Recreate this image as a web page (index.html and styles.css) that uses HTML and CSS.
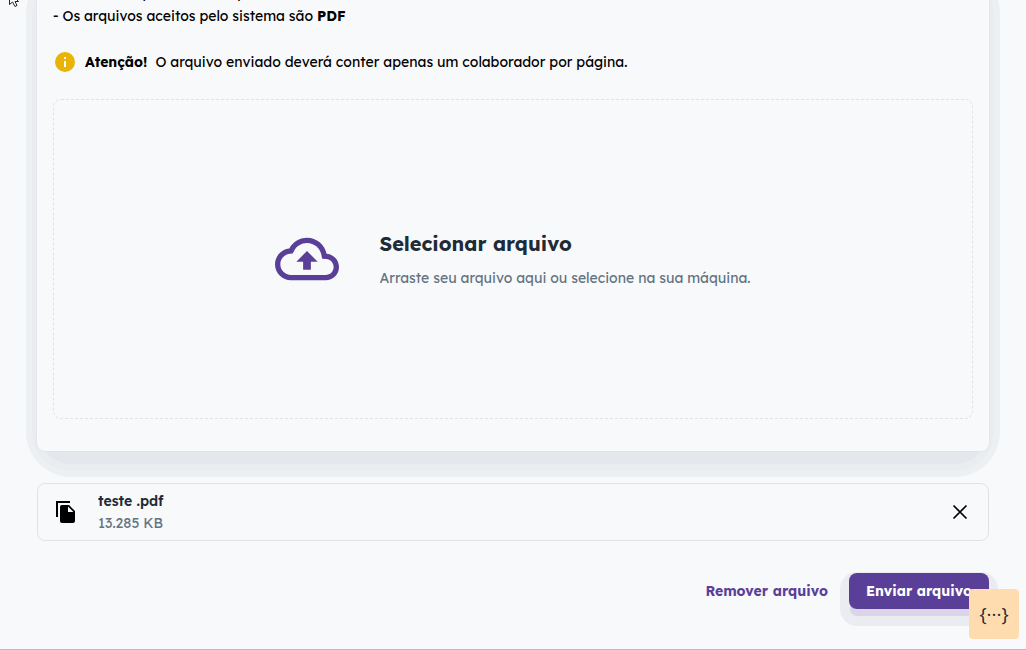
FILE: index.html
```html
<!DOCTYPE html>
<html lang="pt-BR">
<head>
<meta charset="UTF-8">
<meta name="viewport" content="width=device-width, initial-scale=1.0">
<title>Enviar arquivo</title>
<link rel="stylesheet" href="styles.css">
</head>
<body>

<main class="page">
    <section class="card">
        <p class="rule">- O tamanho permitido é o padrão</p>
        <p class="rule">- Os arquivos aceitos pelo sistema são <b>PDF</b></p>
        <div class="alert">
            <svg class="alert-icon" viewBox="0 0 24 24" aria-hidden="true">
                <path fill="#eab308" d="M12 2a10 10 0 1 0 0 20 10 10 0 0 0 0-20zm1 15h-2v-6h2zm0-8h-2V7h2z"/>
                <path fill="#fff" d="M11 11h2v6h-2zM11 7h2v2h-2z"/>
            </svg>
            <b>Atenção!</b>
            <span>O arquivo enviado deverá conter apenas um colaborador por página.</span>
        </div>
        <label class="dropzone" for="fileInput">
            <input class="file-input" type="file" id="fileInput" accept="application/pdf">
            <svg class="cloud" viewBox="0 0 24 24" aria-hidden="true">
                <path d="M19.35 10.04C18.67 6.59 15.64 4 12 4 9.11 4 6.6 5.64 5.35 8.04 2.34 8.36 0 10.91 0 14c0 3.31 2.69 6 6 6h13c2.76 0 5-2.24 5-5 0-2.64-2.05-4.78-4.65-4.96zM19 18H6c-2.21 0-4-1.79-4-4 0-2.05 1.53-3.76 3.56-3.97l1.07-.11.5-.95C8.08 7.14 9.94 6 12 6c2.62 0 4.88 1.86 5.39 4.43l.3 1.5 1.53.11c1.56.1 2.78 1.41 2.78 2.96 0 1.65-1.35 3-3 3zM8 13h2.55v3h2.9v-3H16l-4-4z"/>
            </svg>
            <span class="dropzone-text">
                <span class="dropzone-title">Selecionar arquivo</span>
                <span class="dropzone-hint">Arraste seu arquivo aqui ou selecione na sua máquina.</span>
            </span>
        </label>
    </section>

    <div class="file">
        <svg class="icon" viewBox="0 0 24 24" aria-hidden="true">
            <path d="M16 1H2v16h2V3h12V1zm-1 4 6 6v10c0 1.1-.9 2-2 2H7.99C6.89 23 6 22.1 6 21l.01-14c0-1.1.89-2 1.99-2h7zm-1 7h5.5L14 6.5V12z"/>
        </svg>
        <div class="file-info">
            <span class="file-name">teste .pdf</span>
            <span class="file-size">13.285 KB</span>
        </div>
        <button class="close" type="button" aria-label="Remover">
            <svg class="icon" viewBox="0 0 24 24" aria-hidden="true">
                <path fill="none" stroke="#000" stroke-width="1.7" d="M5.5 5.5l13 13M18.5 5.5l-13 13"/>
            </svg>
        </button>
    </div>

    <div class="actions">
        <button class="btn btn-text" type="button">Remover arquivo</button>
        <button class="btn btn-primary" type="submit">Enviar arquivo</button>
    </div>
</main>

<button class="snippet" type="button">{···}</button>

<svg class="pointer" viewBox="0 0 12 7" aria-hidden="true">
    <path fill="#fff" stroke="#222" d="M1.5-8V4.5L4.5 2 7 6.5 9 5.5 7 1.5h3.5z"/>
</svg>

</body>
</html>
```

FILE: styles.css
```css
* {
    box-sizing: border-box;
}

body {
    margin: 0;
    background-color: #f8f9fb;
    color: #000;
    font-family: Lexend, "Lexend Deca", Inter, sans-serif;
    font-size: 14px;
    line-height: 23px;
}

.page {
    height: 100vh;
    padding: 0 37px;
    overflow: hidden;
    border-bottom: 1px solid #b9bdc1;
}

/* the card is scrolled partly out of view */
.card {
    position: relative;
    z-index: 0;
    margin-top: -34px;
    padding: 16px 16px 32px;
}

/* surface and its stepped shadow */
.card::before,
.card::after {
    content: "";
    position: absolute;
    z-index: -1;
    inset: 0;
    border-radius: 8px;
    background-color: #f8f9fb;
    box-shadow: 0 0 2px #d5d9e0;
}

.card::before {
    inset: 15px 2px -13px;
    z-index: -2;
    border-radius: 32px;
    background-color: #e4e7ec;
    box-shadow: 0 0 0 7px #ebecf0, 0 0 0 13px #edf0f3;
}

.rule {
    margin: 0;
}

.alert {
    display: flex;
    align-items: center;
    gap: 8px;
    margin: 22px 0 25px;
}

.alert-icon {
    width: 24px;
    height: 24px;
}

.dropzone {
    display: flex;
    align-items: center;
    justify-content: center;
    gap: 40px;
    height: 320px;
    border: 1px dashed #dfe3e8;
    border-radius: 8px;
    cursor: pointer;
}

.file-input {
    position: absolute;
    width: 1px;
    height: 1px;
    opacity: 0;
}

.cloud {
    width: 64px;
    height: 64px;
    fill: #5a3f99;
}

.dropzone-text {
    display: flex;
    flex-direction: column;
    gap: 8px;
}

.dropzone-title {
    color: #212b36;
    font-size: 20px;
    font-weight: 700;
    line-height: 30px;
}

.dropzone-hint {
    color: #637381;
}

.icon {
    display: block;
    width: 24px;
    height: 24px;
}

.file {
    display: flex;
    align-items: center;
    gap: 20px;
    height: 58px;
    margin-top: 32px;
    padding: 0 16px;
    border: 1px solid #dfe3e8;
    border-radius: 8px;
}

.file-info {
    display: flex;
    flex: 1;
    flex-direction: column;
    line-height: 22px;
}

.file-name {
    color: #212b36;
    font-weight: 600;
}

.file-size {
    color: #637381;
}

.close {
    padding: 0;
    border: none;
    background: none;
    cursor: pointer;
}

.actions {
    display: flex;
    justify-content: flex-end;
    gap: 4px;
    margin-top: 32px;
}

.btn {
    height: 36px;
    padding: 0 17px;
    border: none;
    border-radius: 8px;
    font-family: inherit;
    font-size: 14px;
    font-weight: 700;
    cursor: pointer;
}

.btn-text {
    background: none;
    color: #5a3f99;
}

.btn-primary {
    background-color: #5a3f99;
    color: #fff;
    box-shadow: 0 8px 0 -1px #dad6e8, 0 8px 0 9px #ebecf1;
}

.snippet {
    position: fixed;
    right: 7px;
    bottom: 11px;
    width: 50px;
    height: 50px;
    padding: 0;
    border: none;
    border-radius: 4px;
    background-color: #ffdcaf;
    color: #212b36;
    font-family: "Open Sans", sans-serif;
    font-size: 19px;
}

.pointer {
    position: absolute;
    top: 0;
    left: 8px;
    width: 12px;
    height: 7px;
}
```
